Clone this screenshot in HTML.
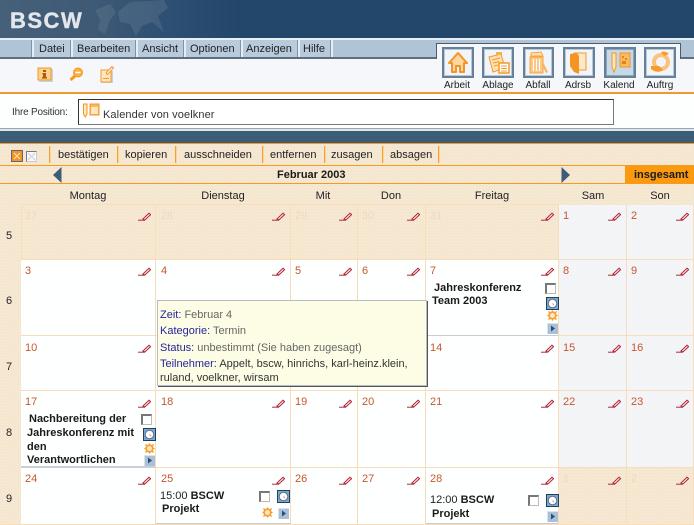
<!DOCTYPE html>
<html><head><meta charset="utf-8"><title>BSCW</title>
<style>
html,body{margin:0;padding:0}
body{width:694px;height:525px;overflow:hidden;position:relative;background:#f5e6d0;font-family:"Liberation Sans",Arial,sans-serif;font-size:11px;color:#222}
div,svg{position:absolute}
.t{position:absolute;white-space:nowrap;line-height:12px;margin-top:1px}
.c{transform:translateX(-50%)}
.b{font-weight:bold;color:#1a1a1a}
.tan{background:#f5e6d0 radial-gradient(#f8eddc .5px,transparent .7px) 0 0/3px 3px}
.cell{box-sizing:border-box;border-right:1px solid #f9dcb8;border-bottom:1px solid #f9dcb8}
.w{background:#feffff}
.g{background:#f2f4f8 radial-gradient(#f7f8f6 .5px,transparent .7px) 0 0/3px 3px}
.n{color:#c8562c}
.o{color:#f1d8bc}
.sep{width:1px;height:17px;top:146px;background:#f9a030;border-right:1px solid #fbd49a}
.ms{width:2px;height:17px;top:40px;background:#e6edf3;border-left:1px solid #7f94a8}
.ib{box-sizing:border-box;width:32px;height:31px;top:47px;border:2px solid #64809a;background:#f1f5f9;box-shadow:inset 0 0 0 1px #b8c8d6}
.cb{box-sizing:border-box;width:11px;height:11px;background:#fff;border:1px solid #bbb;border-top:2px solid #777;border-left:2px solid #777}
.lbl{top:79px;font-size:10px}
.tip b{font-weight:normal;color:#24249c}
.tip{color:#666}
</style></head><body>
<svg width="0" height="0" style="position:absolute"><defs>
<symbol id="pen" viewBox="0 0 13 9"><path d="M0 8.2H7" stroke="#b32a3a" stroke-width="1"/><path d="M5 7L11 1.2 12.6 2.6 6.8 8Z" fill="#fff" stroke="#b32a3a" stroke-width="1.1"/><path d="M5 7l1.8 1-2 .2z" fill="#b32a3a"/></symbol>
<symbol id="clk" viewBox="0 0 13 13"><rect x=".5" y=".5" width="12" height="12" fill="#7aa9d0" stroke="#20405e"/><circle cx="6.5" cy="6.5" r="4.3" fill="#fff" stroke="#57708a"/><path d="M6.5 6.5l1.5 1.5" stroke="#d88" /></symbol>
<symbol id="star" viewBox="0 0 11 11"><path d="M1 1l3 1 1.500-2 1.500 2 3-1-1 3 2 1.500-2 1.500 1 3-3-1-1.500 2-1.500-2-3 1 1-3-2-1.500 2-1.500z" fill="#f9a030"/><circle cx="5.500" cy="5.500" r="2.500" fill="#fde8c8"/></symbol>
<symbol id="ply" viewBox="0 0 11 11"><rect width="11" height="11" fill="#a9c0d8"/><path d="M0 0H11V1H1V11H0z" fill="#d9e4ee"/><path d="M4 2.500L8 5.500 4 8.500z" fill="#2c4d75"/></symbol>
</defs></svg>

<!-- header -->
<div style="left:0;top:0;width:694px;height:38px;background:linear-gradient(90deg,#46607a 0,#3f5a75 90px,#2c4f72 170px,#23466b 240px,#23466b 100%)"></div>
<svg style="left:80px;top:0" width="100" height="38" viewBox="0 0 100 38"><path d="M15 10L30 4 36 12 30 20 25 34 18 30 20 20zM38 12L50 2 84 0 88 8 78 16 84 32 72 22 62 26 56 36 50 24 40 22z" fill="#71849a" opacity=".3"/></svg>
<div class="t" style="left:10px;top:7px;font-size:22px;line-height:26px;font-weight:bold;color:#e2e7ec;letter-spacing:1.5px;-webkit-text-stroke:.4px #e2e7ec">BSCW</div>

<!-- menu -->
<div style="left:0;top:38px;width:694px;height:2px;background:#e8eef3"></div>
<div style="left:0;top:40px;width:694px;height:17px;background:#b0c4d8"></div>
<div style="left:0;top:57px;width:694px;height:2px;background:#5f6f80"></div>
<div style="left:32px;top:40px;width:299px;height:17px;background:#b8cbdc"></div>
<div class="ms" style="left:31px"></div><div class="ms" style="left:70px"></div><div class="ms" style="left:135px"></div><div class="ms" style="left:183px"></div><div class="ms" style="left:240px"></div><div class="ms" style="left:297px"></div><div class="ms" style="left:330px"></div>
<div class="t" style="left:39px;top:42px">Datei</div>
<div class="t" style="left:77px;top:42px">Bearbeiten</div>
<div class="t" style="left:142px;top:42px">Ansicht</div>
<div class="t" style="left:190px;top:42px">Optionen</div>
<div class="t" style="left:246px;top:42px">Anzeigen</div>
<div class="t" style="left:303px;top:42px">Hilfe</div>

<!-- toolbar -->
<div style="left:0;top:59px;width:694px;height:33px;background:#f5f7fa"></div>
<div style="left:436px;top:43px;width:245px;height:16px;box-sizing:border-box;background:#f5f7fa;border:1px solid #4a5c6e;border-bottom:none"></div>
<div style="left:0;top:92px;width:694px;height:2px;background:#ee9a2e"></div>
<svg style="left:37px;top:67px" width="16" height="15" viewBox="0 0 16 15"><rect x="2" y="2" width="14" height="13" fill="#c9d3dc"/><rect x="1" y="1" width="13" height="12" fill="#fbd08a" stroke="#f39a24"/><path d="M6 3h3v2H6zM5.500 6h3.500v4h1v1.500H5v-1.500h1V7.500h-.5z" fill="#a85a10"/></svg>
<svg style="left:69px;top:67px" width="15" height="15" viewBox="0 0 15 15"><path d="M7 8L1.500 13" stroke="#f59a24" stroke-width="3"/><circle cx="9" cy="5.500" r="4.500" fill="#fbb040" stroke="#f39a24"/><path d="M6.500 5.500h5" stroke="#fff" stroke-width="1.500"/></svg>
<svg style="left:100px;top:65px" width="15" height="18" viewBox="0 0 15 18"><rect x="2" y="6" width="11" height="12" fill="#c9d3dc"/><rect x="1" y="5" width="10" height="12" fill="#fde6c2" stroke="#f39a24"/><path d="M3 13.500h6" stroke="#f39a24"/><path d="M6 8L12 1.500 13.500 3 7.500 9.500z" fill="#fff" stroke="#f39a24"/></svg>

<div class="ib" style="left:442px"></div>
<svg style="left:446px;top:50px" width="24" height="25" viewBox="0 0 24 25"><path d="M12 3L21 13H18V22H14V16H10V22H6V13H3Z" fill="#fdd7a0" stroke="#f39424" stroke-width="2" stroke-linejoin="round"/></svg>
<div class="ib" style="left:482px"></div>
<svg style="left:486px;top:50px" width="25" height="25" viewBox="0 0 25 25"><path d="M3 7L15 4 19 18 7 22z" fill="#fde0b4" stroke="#f39a24"/><rect x="10" y="2" width="6" height="3" fill="#f8b050"/><rect x="13" y="13" width="10" height="10" fill="#fff" stroke="#f39a24" stroke-width="1.500"/><path d="M6 10l8-2M7 13l6-1.500M8 16l4-1M15 16h6M15 18.500h6M15 21h6" stroke="#f39a24"/></svg>
<div class="ib" style="left:523px;width:31px"></div>
<svg style="left:526px;top:50px" width="25" height="25" viewBox="0 0 25 25"><path d="M5 3l10-1 2 4H5z" fill="#fde0b4" stroke="#f5a640"/><rect x="4" y="7" width="13" height="16" fill="#fcc888" stroke="#f5a640"/><path d="M7.500 9v12M10.500 9v12M13.500 9v12" stroke="#fff"/><path d="M17 12l5 10-2 1-4-8z" fill="#f8b466"/></svg>
<div class="ib" style="left:563px"></div>
<svg style="left:567px;top:50px" width="24" height="25" viewBox="0 0 24 25"><path d="M7 3H19V20H7z" fill="#fde8cc" stroke="#f39a24"/><path d="M3 4L10 3 12 6V24L7 22 3 16z" fill="#f39424"/></svg>
<div class="ib" style="left:604px;background:#c8d9e6;box-shadow:inset 0 0 0 1px #8ea6bb"></div>
<svg style="left:608px;top:50px" width="24" height="25" viewBox="0 0 24 25"><path d="M4 3H8V17L6 22 4 17z" fill="#fde6c4" stroke="#f39424"/><rect x="12" y="3" width="10" height="14" fill="#fbba62" stroke="#f39424"/><path d="M14 6h2v2h-2zM17 8h2v2h-2zM14 11h4v3h-4z" fill="#e08418"/></svg>
<div class="ib" style="left:644px"></div>
<svg style="left:648px;top:50px" width="24" height="25" viewBox="0 0 24 25"><circle cx="13" cy="12" r="7" fill="none" stroke="#fbc27c" stroke-width="4"/><path d="M13 2c3-1 6 0 8 2l-5 2zM3 16l8 0 4 4c-4 3-9 2-12-1z" fill="#f59c2c"/></svg>
<div class="t c lbl" style="left:457px">Arbeit</div>
<div class="t c lbl" style="left:498px">Ablage</div>
<div class="t c lbl" style="left:538px">Abfall</div>
<div class="t c lbl" style="left:578px">Adrsb</div>
<div class="t c lbl" style="left:619px">Kalend</div>
<div class="t c lbl" style="left:660px">Auftrg</div>

<!-- position -->
<div style="left:0;top:94px;width:694px;height:34px;background:#fdfefe"></div>
<div style="left:0;top:128px;width:694px;height:1px;background:#9aa7b3"></div>
<div class="t" style="left:12px;top:106px;font-size:10px;letter-spacing:-.2px;color:#333">Ihre Position:</div>
<div style="left:78px;top:99px;width:536px;height:26px;box-sizing:border-box;background:#fff;border:1px solid #333;border-right-color:#777;border-bottom-color:#777"></div>
<svg style="left:83px;top:103px" width="18" height="16" viewBox="0 0 18 16"><path d="M.5 1h3.500v10L2.200 14 .5 11z" fill="#fde6c4" stroke="#f39424"/><rect x="7" y="1" width="9" height="11" fill="#fbb860" stroke="#f39424"/><rect x="8" y="4" width="7" height="7" fill="#fde6c4"/></svg>
<div class="t" style="left:103px;top:108px;letter-spacing:.1px;color:#333">Kalender von voelkner</div>

<!-- band -->
<div style="left:0;top:129px;width:694px;height:2px;background:#dfe5ea"></div>
<div style="left:0;top:131px;width:694px;height:12px;background:#3c5c78"></div>
<div style="left:0;top:143px;width:694px;height:1px;background:#f79a1e"></div>

<!-- action bar -->
<div class="tan" style="left:0;top:144px;width:694px;height:381px"></div>
<div style="left:11px;top:150px;width:10px;height:10px;background:#f59420;border:1px solid #667"></div>
<svg style="left:11px;top:150px" width="12" height="12"><path d="M3 3l6 6M9 3l-6 6" stroke="#fde6c4"/></svg>
<div style="left:26px;top:151px;width:9px;height:9px;background:#f8f8f8;border:1px solid #778;border-right-color:#ccc;border-bottom-color:#ccc"></div>
<svg style="left:26px;top:151px" width="11" height="11"><path d="M2 2l7 7M9 2l-7 7" stroke="#c9d3dc"/></svg>
<div class="sep" style="left:49px"></div><div class="sep" style="left:117px"></div><div class="sep" style="left:175px"></div><div class="sep" style="left:262px"></div><div class="sep" style="left:324px"></div><div class="sep" style="left:382px"></div><div class="sep" style="left:438px"></div>
<div class="t" style="left:58px;top:148px">bestätigen</div>
<div class="t" style="left:125px;top:148px">kopieren</div>
<div class="t" style="left:184px;top:148px">ausschneiden</div>
<div class="t" style="left:270px;top:148px">entfernen</div>
<div class="t" style="left:331px;top:148px">zusagen</div>
<div class="t" style="left:390px;top:148px">absagen</div>
<div style="left:0;top:165px;width:694px;height:1px;background:#f79a1e"></div>
<div style="left:0;top:183px;width:694px;height:1px;background:#f79a1e"></div>
<svg style="left:53px;top:167px" width="9" height="16"><path d="M8.500 0V16L0 8Z" fill="#3c5c78"/></svg>
<svg style="left:561px;top:167px" width="9" height="16"><path d="M.5 0V16L9 8Z" fill="#3c5c78"/></svg>
<div class="t b" style="left:277px;top:168px">Februar 2003</div>
<div style="left:625px;top:166px;width:69px;height:17px;background:#f99a10"></div>
<div class="t b" style="left:634px;top:168px">insgesamt</div>

<div class="t c" style="left:88px;top:189px">Montag</div>
<div class="t c" style="left:223px;top:189px">Dienstag</div>
<div class="t c" style="left:323px;top:189px">Mit</div>
<div class="t c" style="left:391px;top:189px">Don</div>
<div class="t c" style="left:492px;top:189px">Freitag</div>
<div class="t c" style="left:593px;top:189px">Sam</div>
<div class="t c" style="left:660px;top:189px">Son</div>

<div class="t" style="left:6px;top:229px">5</div>
<div class="t" style="left:6px;top:294px">6</div>
<div class="t" style="left:6px;top:360px">7</div>
<div class="t" style="left:6px;top:426px">8</div>
<div class="t" style="left:6px;top:492px">9</div>

<!-- week 5 -->
<div class="cell" style="left:21px;top:204px;width:135px;height:56px;border-left:1px solid #f9dcb8;border-top:1px solid #f9dcb8"></div>
<div class="cell" style="left:156px;top:204px;width:135px;height:56px;border-top:1px solid #f9dcb8"></div>
<div class="cell" style="left:291px;top:204px;width:67px;height:56px;border-top:1px solid #f9dcb8"></div>
<div class="cell" style="left:358px;top:204px;width:68px;height:56px;border-top:1px solid #f9dcb8"></div>
<div class="cell" style="left:426px;top:204px;width:133px;height:56px;border-top:1px solid #f9dcb8"></div>
<div class="cell g" style="left:559px;top:205px;width:68px;height:55px"></div>
<div class="cell g" style="left:627px;top:205px;width:67px;height:55px"></div>
<!-- week 6 -->
<div class="cell w" style="left:21px;top:260px;width:135px;height:76px"></div>
<div class="cell w" style="left:156px;top:260px;width:135px;height:76px"></div>
<div class="cell w" style="left:291px;top:260px;width:67px;height:76px"></div>
<div class="cell w" style="left:358px;top:260px;width:68px;height:76px"></div>
<div class="cell w" style="left:426px;top:260px;width:133px;height:76px;border-bottom:1px solid #c4ccd4"></div>
<div class="cell g" style="left:559px;top:260px;width:68px;height:76px"></div>
<div class="cell g" style="left:627px;top:260px;width:67px;height:76px"></div>
<!-- week 7 -->
<div class="cell w" style="left:21px;top:336px;width:135px;height:55px"></div>
<div class="cell w" style="left:156px;top:336px;width:135px;height:55px"></div>
<div class="cell w" style="left:291px;top:336px;width:67px;height:55px"></div>
<div class="cell w" style="left:358px;top:336px;width:68px;height:55px"></div>
<div class="cell w" style="left:426px;top:336px;width:133px;height:55px"></div>
<div class="cell g" style="left:559px;top:336px;width:68px;height:55px"></div>
<div class="cell g" style="left:627px;top:336px;width:67px;height:55px"></div>
<!-- week 8 -->
<div class="cell w" style="left:21px;top:391px;width:135px;height:77px;border-bottom:2px solid #c9d0d8"></div>
<div class="cell w" style="left:156px;top:391px;width:135px;height:77px"></div>
<div class="cell w" style="left:291px;top:391px;width:67px;height:77px"></div>
<div class="cell w" style="left:358px;top:391px;width:68px;height:77px"></div>
<div class="cell w" style="left:426px;top:391px;width:133px;height:77px"></div>
<div class="cell g" style="left:559px;top:391px;width:68px;height:77px"></div>
<div class="cell g" style="left:627px;top:391px;width:67px;height:77px"></div>
<!-- week 9 -->
<div class="cell w" style="left:21px;top:468px;width:135px;height:57px"></div>
<div class="cell w" style="left:156px;top:468px;width:135px;height:56px;border-bottom:1px solid #c4ccd4"></div>
<div class="cell w" style="left:291px;top:468px;width:67px;height:57px"></div>
<div class="cell w" style="left:358px;top:468px;width:68px;height:57px"></div>
<div class="cell w" style="left:426px;top:468px;width:133px;height:56px;border-bottom:1px solid #c4ccd4"></div>
<div class="cell" style="left:559px;top:468px;width:68px;height:57px"></div>
<div class="cell" style="left:627px;top:468px;width:67px;height:57px"></div>
<div style="left:0;top:524px;width:694px;height:1px;background:#f9dcb8"></div>

<!-- numbers -->
<div class="t n o" style="left:25px;top:209px">27</div><div class="t n o" style="left:161px;top:209px">28</div><div class="t n o" style="left:295px;top:209px">29</div><div class="t n o" style="left:362px;top:209px">30</div><div class="t n o" style="left:430px;top:209px">31</div><div class="t n" style="left:563px;top:209px">1</div><div class="t n" style="left:631px;top:209px">2</div>
<div class="t n" style="left:25px;top:264px">3</div><div class="t n" style="left:161px;top:264px">4</div><div class="t n" style="left:295px;top:264px">5</div><div class="t n" style="left:362px;top:264px">6</div><div class="t n" style="left:430px;top:264px">7</div><div class="t n" style="left:563px;top:264px">8</div><div class="t n" style="left:631px;top:264px">9</div>
<div class="t n" style="left:25px;top:341px">10</div><div class="t n" style="left:430px;top:341px">14</div><div class="t n" style="left:563px;top:341px">15</div><div class="t n" style="left:631px;top:341px">16</div>
<div class="t n" style="left:25px;top:395px">17</div><div class="t n" style="left:161px;top:395px">18</div><div class="t n" style="left:295px;top:395px">19</div><div class="t n" style="left:362px;top:395px">20</div><div class="t n" style="left:430px;top:395px">21</div><div class="t n" style="left:563px;top:395px">22</div><div class="t n" style="left:631px;top:395px">23</div>
<div class="t n" style="left:25px;top:472px">24</div><div class="t n" style="left:161px;top:472px">25</div><div class="t n" style="left:295px;top:472px">26</div><div class="t n" style="left:362px;top:472px">27</div><div class="t n" style="left:430px;top:472px">28</div><div class="t n o" style="left:563px;top:472px">1</div><div class="t n o" style="left:631px;top:472px">2</div>

<!-- pens -->
<svg style="left:138px;top:212px" width="13" height="9"><use href="#pen"/></svg><svg style="left:272px;top:212px" width="13" height="9"><use href="#pen"/></svg><svg style="left:339px;top:212px" width="13" height="9"><use href="#pen"/></svg><svg style="left:407px;top:212px" width="13" height="9"><use href="#pen"/></svg><svg style="left:541px;top:212px" width="13" height="9"><use href="#pen"/></svg><svg style="left:608px;top:212px" width="13" height="9"><use href="#pen"/></svg><svg style="left:676px;top:212px" width="13" height="9"><use href="#pen"/></svg>
<svg style="left:138px;top:267px" width="13" height="9"><use href="#pen"/></svg><svg style="left:272px;top:267px" width="13" height="9"><use href="#pen"/></svg><svg style="left:339px;top:267px" width="13" height="9"><use href="#pen"/></svg><svg style="left:407px;top:267px" width="13" height="9"><use href="#pen"/></svg><svg style="left:541px;top:267px" width="13" height="9"><use href="#pen"/></svg><svg style="left:608px;top:267px" width="13" height="9"><use href="#pen"/></svg><svg style="left:676px;top:267px" width="13" height="9"><use href="#pen"/></svg>
<svg style="left:138px;top:344px" width="13" height="9"><use href="#pen"/></svg><svg style="left:541px;top:344px" width="13" height="9"><use href="#pen"/></svg><svg style="left:608px;top:344px" width="13" height="9"><use href="#pen"/></svg><svg style="left:676px;top:344px" width="13" height="9"><use href="#pen"/></svg>
<svg style="left:138px;top:399px" width="13" height="9"><use href="#pen"/></svg><svg style="left:272px;top:399px" width="13" height="9"><use href="#pen"/></svg><svg style="left:339px;top:399px" width="13" height="9"><use href="#pen"/></svg><svg style="left:407px;top:399px" width="13" height="9"><use href="#pen"/></svg><svg style="left:541px;top:399px" width="13" height="9"><use href="#pen"/></svg><svg style="left:608px;top:399px" width="13" height="9"><use href="#pen"/></svg><svg style="left:676px;top:399px" width="13" height="9"><use href="#pen"/></svg>
<svg style="left:138px;top:476px" width="13" height="9"><use href="#pen"/></svg><svg style="left:272px;top:476px" width="13" height="9"><use href="#pen"/></svg><svg style="left:339px;top:476px" width="13" height="9"><use href="#pen"/></svg><svg style="left:407px;top:476px" width="13" height="9"><use href="#pen"/></svg><svg style="left:541px;top:476px" width="13" height="9"><use href="#pen"/></svg><svg style="left:608px;top:476px" width="13" height="9"><use href="#pen"/></svg><svg style="left:676px;top:476px" width="13" height="9"><use href="#pen"/></svg>

<!-- event 7 -->
<div class="t b" style="left:434px;top:281px">Jahreskonferenz</div>
<div class="t b" style="left:432px;top:294px">Team 2003</div>
<div class="cb" style="left:545px;top:283px"></div>
<svg style="left:546px;top:297px" width="13" height="13"><use href="#clk"/></svg>
<svg style="left:547px;top:310px" width="11" height="11"><use href="#star"/></svg>
<svg style="left:547px;top:323px" width="11" height="11"><use href="#ply"/></svg>
<!-- event 17 -->
<div class="t b" style="left:29px;top:412px">Nachbereitung der</div>
<div class="t b" style="left:27px;top:426px">Jahreskonferenz mit</div>
<div class="t b" style="left:27px;top:440px">den</div>
<div class="t b" style="left:27px;top:453px">Verantwortlichen</div>
<div class="cb" style="left:141px;top:414px"></div>
<svg style="left:143px;top:428px" width="13" height="13"><use href="#clk"/></svg>
<svg style="left:144px;top:443px" width="11" height="11"><use href="#star"/></svg>
<svg style="left:144px;top:455px" width="11" height="11"><use href="#ply"/></svg>
<!-- event 25 -->
<div class="t" style="left:160px;top:489px">15:00 <span class="b">BSCW</span></div>
<div class="t b" style="left:162px;top:502px">Projekt</div>
<div class="cb" style="left:259px;top:491px"></div>
<svg style="left:277px;top:490px" width="13" height="13"><use href="#clk"/></svg>
<svg style="left:262px;top:507px" width="11" height="11"><use href="#star"/></svg>
<svg style="left:278px;top:508px" width="11" height="11"><use href="#ply"/></svg>
<!-- event 28 -->
<div class="t" style="left:430px;top:493px">12:00 <span class="b">BSCW</span></div>
<div class="t b" style="left:432px;top:507px">Projekt</div>
<div class="cb" style="left:528px;top:495px"></div>
<svg style="left:546px;top:494px" width="13" height="13"><use href="#clk"/></svg>
<svg style="left:547px;top:511px" width="11" height="11"><use href="#ply"/></svg>

<!-- tooltip -->
<div style="left:157px;top:300px;width:270px;height:86px;box-sizing:border-box;background:#fdfde6;border:1px solid #b8bcc0;box-shadow:1px 1px 0 #555"></div>
<div class="t tip" style="left:160px;top:308px"><b>Zeit:</b> Februar 4</div>
<div class="t tip" style="left:160px;top:324px"><b>Kategorie:</b> Termin</div>
<div class="t tip" style="left:160px;top:341px"><b>Status:</b> unbestimmt (Sie haben zugesagt)</div>
<div class="t tip" style="left:160px;top:357px"><b>Teilnehmer:</b> <span style="color:#333">Appelt, bscw, hinrichs, karl-heinz.klein,</span></div>
<div class="t" style="left:160px;top:371px;color:#333">ruland, voelkner, wirsam</div>
</body></html>
